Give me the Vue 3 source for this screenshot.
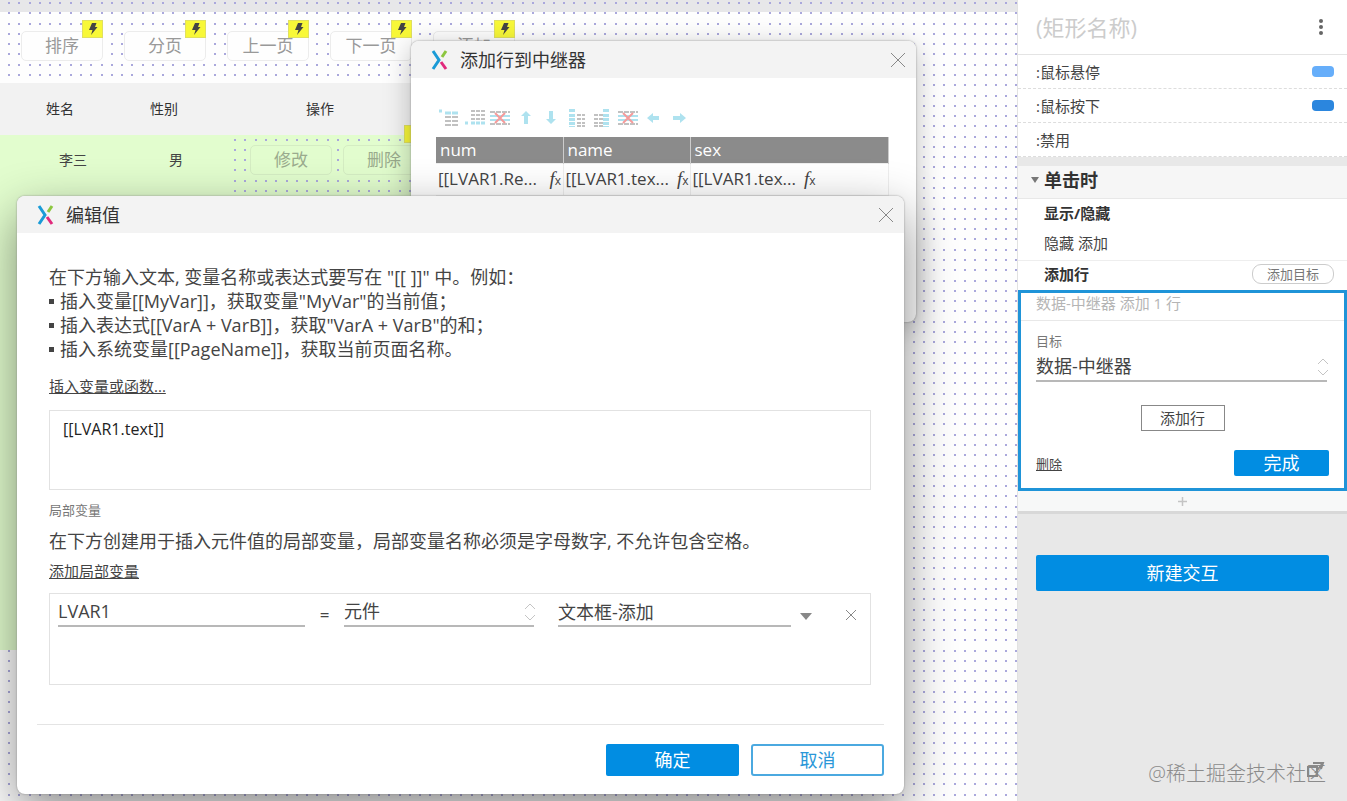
<script setup>
import { ref, computed } from 'vue'

const toolbar = ['排序', '分页', '上一页', '下一页', '添加']
const rowActions = ['修改', '删除']
const states = [
  { name: ':鼠标悬停', tone: 'light' },
  { name: ':鼠标按下', tone: 'deep' },
  { name: ':禁用', tone: '' }
]
const columns = ['num', 'name', 'sex']
const cells = ['[[LVAR1.Re...', '[[LVAR1.tex...', '[[LVAR1.tex...']

const expression = ref('[[LVAR1.text]]')
const variableName = ref('LVAR1')
const widgetName = ref('文本框-添加')

// One path holds every dot of the canvas grid.
const gridPath = computed(() => {
  const parts = []
  for (let row = 0; row < 120; row++) {
    for (let col = 0; col < 240; col++) {
      parts.push(`M${Math.round(8 + col * 10.28)} ${Math.round(3 + row * 10.28)}h2`)
    }
  }
  return parts.join('')
})

const tableTools = [
  { name: '在上方添加行', kind: 'rowAbove' },
  { name: '在下方添加行', kind: 'rowBelow' },
  { name: '删除行', kind: 'remove' },
  { name: '上移', kind: 'up' },
  { name: '下移', kind: 'down' },
  { name: '在左侧添加列', kind: 'colLeft' },
  { name: '在右侧添加列', kind: 'colRight' },
  { name: '删除列', kind: 'remove' },
  { name: '左移', kind: 'left' },
  { name: '右移', kind: 'right' }
]
</script>

<template>
  <div class="app">
    <main class="canvas">
      <div class="ruler"></div>
      <svg class="grid" aria-hidden="true"><path :d="gridPath" /></svg>
      <div class="toolbar">
        <div v-for="t in toolbar" :key="t" class="tool">
          <button class="ghost">{{ t }}</button>
          <span class="badge">
            <svg width="10" height="12" viewBox="0 0 10 12"><path d="M4 0H8.500L7 4H9.500L3 12L4.500 7H1L4 0Z" /></svg>
          </span>
        </div>
      </div>
      <div class="repeater-head">
        <span class="c-name">姓名</span>
        <span class="c-sex">性别</span>
        <span class="c-ops">操作</span>
      </div>
      <div class="repeater-row">
        <span class="r-name">李三</span>
        <span class="r-sex">男</span>
        <div class="r-ops">
          <svg class="op-grid" aria-hidden="true"><path :d="gridPath" transform="translate(-233 -132)" /></svg>
          <button v-for="a in rowActions" :key="a" class="ghost tinted">{{ a }}</button>
          <span class="badge op-badge"></span>
        </div>
      </div>
    </main>

    <aside class="panel">
      <header class="panel-head">
        <input class="shape-name" aria-label="矩形名称" placeholder="(矩形名称)" />
        <button class="icon-btn" aria-label="更多">
          <svg width="6" height="18" viewBox="0 0 6 18" fill="#666"><circle cx="3" cy="3" r="2" /><circle cx="3" cy="9" r="2" /><circle cx="3" cy="15" r="2" /></svg>
        </button>
      </header>
      <ul class="states">
        <li v-for="s in states" :key="s.name">
          <span>{{ s.name }}</span>
          <i v-if="s.tone" class="pill" :class="s.tone"></i>
        </li>
      </ul>
      <div class="event">
        <svg width="8" height="6" viewBox="0 0 8 6"><path d="M0 0H8L4 6Z" fill="#777" /></svg>
        <h2>单击时</h2>
      </div>
      <div class="action">
        <h3>显示/隐藏</h3>
        <p>隐藏 添加</p>
      </div>
      <div class="action-line">
        <h3>添加行</h3>
        <button class="target-btn">添加目标</button>
      </div>
      <section class="card">
        <p class="card-title">数据-中继器 添加 1 行</p>
        <div class="card-body">
          <label class="small-label" for="target">目标</label>
          <div class="select-wrap">
            <select id="target"><option>数据-中继器</option></select>
            <svg class="updown" width="12" height="18" viewBox="0 0 12 18"><path d="M1 6L6 1L11 6M1 12L6 17L11 12" /></svg>
          </div>
          <button class="add-row">添加行</button>
          <div class="card-foot">
            <a href="#" class="remove">删除</a>
            <button class="primary done">完成</button>
          </div>
        </div>
      </section>
      <button class="plus" aria-label="添加动作">
        <svg width="9" height="9" viewBox="0 0 9 9"><path d="M4.500 0V9M0 4.500H9" stroke="#c4c4c4" stroke-width="1.500" /></svg>
      </button>
      <div class="panel-rest">
        <button class="primary new">新建交互</button>
        <div class="watermark">@稀土掘金技术社区
          <svg class="popout" width="20" height="18" viewBox="0 0 20 18"><path d="M2 6H11V15H2ZM7 2H17L15 8M9 12L16 3" /></svg>
        </div>
      </div>
    </aside>

    <section class="dialog rows-dialog" role="dialog" aria-label="添加行到中继器">
      <header class="dialog-head">
        <svg width="17" height="20" viewBox="0 0 17 20" fill="none" stroke-width="3"><path d="M2 1L8 10L2 19" stroke="#1a9bd7" /><path d="M15 1L11 7" stroke="#8cc63f" /><path d="M10 12L15 19" stroke="#e0297c" /></svg>
        <h1>添加行到中继器</h1>
        <button class="icon-btn" aria-label="关闭"><svg class="cross" width="16" height="16" viewBox="0 0 16 16"><path d="M1 1L15 15M15 1L1 15" /></svg></button>
      </header>
      <div class="rows-body">
        <div class="table-tools">
          <button v-for="(t, i) in tableTools" :key="i" class="icon-btn" :aria-label="t.name">
            <svg width="20" height="18" viewBox="0 0 20 18" fill="none">
              <g v-if="t.kind === 'rowAbove'"><path d="M0 2H3M6 4H20" class="cy" stroke-dasharray="6 1" /><path d="M6 8H20M6 12H20M6 16H20" class="gr" stroke-dasharray="6 1" /></g>
              <g v-else-if="t.kind === 'rowBelow'"><path d="M6 2H20M6 6H20M6 10H20" class="gr" stroke-dasharray="4 1" /><path d="M0 14H3M6 14H20" class="cy" stroke-dasharray="4 1" /></g>
              <g v-else-if="t.kind === 'remove'"><path d="M0 3H20M0 15H20" class="gr" stroke-dasharray="5 1" /><path d="M0 7H20M0 11H20" class="cy thin" /><path d="M5 4L15 14M15 4L5 14" class="rd" /></g>
              <path v-else-if="t.kind === 'up'" d="M10 2L15 7H12V15H8V7H5Z" class="fill" />
              <path v-else-if="t.kind === 'down'" d="M10 15L5 10H8V2H12V10H15Z" class="fill" />
              <g v-else-if="t.kind === 'colLeft'"><path d="M5 0V3M5 5V18" class="cy wide" stroke-dasharray="3 1" /><path d="M10 6H18M10 10H18M10 14H18M10 17H18" class="gr" stroke-dasharray="4 1" /></g>
              <g v-else-if="t.kind === 'colRight'"><path d="M14 0V3M14 5V18" class="cy wide" stroke-dasharray="3 1" /><path d="M2 6H11M2 10H11M2 14H11M2 17H11" class="gr" stroke-dasharray="4 1" /></g>
              <path v-else-if="t.kind === 'left'" d="M4 9L10 4V7H16V11H10V14Z" class="fill" />
              <path v-else d="M17 9L11 4V7H4V11H11V14Z" class="fill" />
            </svg>
          </button>
        </div>
        <table>
          <colgroup><col class="w1" /><col class="w1" /><col /></colgroup>
          <thead><tr><th v-for="c in columns" :key="c">{{ c }}</th></tr></thead>
          <tbody><tr><td v-for="(c, i) in cells" :key="i"><div class="cell"><span>{{ c }}</span><i class="fx">f<sub>x</sub></i></div></td></tr></tbody>
        </table>
      </div>
    </section>

    <section class="dialog edit-dialog" role="dialog" aria-label="编辑值">
      <header class="dialog-head">
        <svg width="17" height="20" viewBox="0 0 17 20" fill="none" stroke-width="3"><path d="M2 1L8 10L2 19" stroke="#1a9bd7" /><path d="M15 1L11 7" stroke="#8cc63f" /><path d="M10 12L15 19" stroke="#e0297c" /></svg>
        <h1>编辑值</h1>
        <button class="icon-btn" aria-label="关闭"><svg class="cross" width="16" height="16" viewBox="0 0 16 16"><path d="M1 1L15 15M15 1L1 15" /></svg></button>
      </header>
      <div class="edit-body">
        <p class="help">在下方输入文本, 变量名称或表达式要写在 "[[ ]]" 中。例如：</p>
        <ul class="help">
          <li>插入变量[[MyVar]]，获取变量"MyVar"的当前值；</li>
          <li>插入表达式[[VarA + VarB]]，获取"VarA + VarB"的和；</li>
          <li>插入系统变量[[PageName]]，获取当前页面名称。</li>
        </ul>
        <a href="#" class="link insert">插入变量或函数...</a>
        <textarea v-model="expression" aria-label="表达式"></textarea>
        <p class="small-label">局部变量</p>
        <p class="help">在下方创建用于插入元件值的局部变量，局部变量名称必须是字母数字, 不允许包含空格。</p>
        <a href="#" class="link">添加局部变量</a>
        <div class="vars">
          <input v-model="variableName" class="v-name" aria-label="变量名" />
          <span class="eq">=</span>
          <div class="select-wrap v-type">
            <select aria-label="类型"><option>元件</option></select>
            <svg class="updown" width="12" height="18" viewBox="0 0 12 18"><path d="M1 6L6 1L11 6M1 12L6 17L11 12" /></svg>
          </div>
          <input v-model="widgetName" class="v-widget" aria-label="元件名" />
          <button class="icon-btn v-drop" aria-label="展开"><svg width="12" height="7" viewBox="0 0 12 7"><path d="M0 0H12L6 7Z" fill="#888" /></svg></button>
          <button class="icon-btn v-del" aria-label="移除"><svg class="cross" width="12" height="12" viewBox="0 0 12 12"><path d="M1 1L11 11M11 1L1 11" /></svg></button>
        </div>
      </div>
      <footer class="edit-foot">
        <button class="primary">确定</button>
        <button class="secondary">取消</button>
      </footer>
    </section>
  </div>
</template>

<style>
html, body { background: #fff; overflow: hidden; }
</style>

<style scoped>
.app {
  position: relative;
  display: flex;
  min-height: 100vh;
  overflow: hidden;
  color: #444;
  font-family: "Open Sans", "Noto Sans CJK SC", sans-serif;
  font-size: 15px;
  line-height: 24px;
}
*, *::before, *::after { box-sizing: border-box; }
h1, h2, h3, p, ul { margin: 0; padding: 0; }
ul { list-style: none; }
button, input, select, textarea {
  margin: 0; padding: 0; border: 0; outline: 0; border-radius: 0;
  background: none; color: inherit; font: inherit; appearance: none;
}
.icon-btn { display: flex; align-items: center; justify-content: center; }
svg { display: block; }

.canvas { position: relative; flex: 1; min-width: 0; overflow: hidden; background: #fefefe; }
.ruler { height: 12px; background: #e7e7e9; }
.grid { position: absolute; left: 0; top: 0; width: 100%; height: 100%; }
.grid path, .op-grid path { stroke: #aaa8dc; stroke-width: 2; }
.toolbar { position: relative; display: flex; gap: 21px; padding: 19px 21px 22px; }
.tool { position: relative; }
.ghost {
  display: block; width: 82px; height: 30px; padding: 0;
  border: 1px solid #ececec; border-radius: 5px;
  background: #fefefe; color: #999; font-size: 17px; line-height: 28px; text-align: center;
}
.badge {
  position: absolute; right: 0; top: -11px; width: 21px; height: 18px;
  display: flex; align-items: center; justify-content: center;
  border: 1px solid #e0e060; background: #f8f838;
}
.badge path { fill: #444; }
.repeater-head {
  position: relative; display: flex; align-items: center; width: 600px; height: 52px;
  background: #f2f2f2; color: #333; font-size: 14px;
}
.c-name { margin-left: 46px; width: 104px; }
.c-sex { width: 156px; }
.repeater-row {
  position: relative; display: flex; width: 600px; height: 515px;
  background: #e2fdce; color: #444; font-size: 14px; line-height: 50px;
}
.r-name { margin-left: 59px; width: 110px; }
.r-sex { width: 64px; }
.r-ops { position: relative; display: flex; gap: 11px; width: 206px; height: 62px; padding: 10px 0 0 17px; }
.op-grid { position: absolute; left: 0; top: 0; width: 100%; height: 100%; }
.tinted { position: relative; background: #e2fdce; border-color: #d5edc3; color: #9aab8d; }
.op-badge { top: -10px; right: 14px; }

.panel {
  position: relative; z-index: 1; width: 330px; display: flex; flex-direction: column;
  border-left: 1px solid #e2e2e2; background: #fff;
}
.panel-head {
  display: flex; align-items: center; justify-content: space-between;
  height: 55px; padding: 0 23px 0 18px; border-bottom: 1px solid #e4e4e4;
}
.shape-name { width: 200px; height: 34px; font-size: 22px; }
.shape-name::placeholder { color: #ccc; opacity: 1; }
.states li {
  display: flex; align-items: center; justify-content: space-between;
  height: 34px; padding: 0 13px 0 18px; border-bottom: 1px dashed #ddd;
}
.pill { width: 22px; height: 11px; border-radius: 4px; }
.light { background: #66aefa; }
.deep { background: #2b86de; }
.event {
  display: flex; align-items: center; gap: 5px; height: 42px; padding: 0 0 5px 13px;
  border-top: 9px solid #e8e8e8; border-bottom: 1px solid #e8e8e8; background: #f6f6f6;
}
h2 { color: #333; font-size: 18px; font-weight: 700; }
h3 { color: #333; font-size: 15px; font-weight: 700; }
.action { display: flex; flex-direction: column; gap: 6px; padding: 2px 0 5px 26px; border-bottom: 1px solid #eee; }
.action-line { display: flex; align-items: center; justify-content: space-between; height: 29px; padding: 0 13px 4px 26px; }
.target-btn { width: 82px; height: 20px; border: 1px solid #ccc; border-radius: 9px; color: #777; font-size: 13px; line-height: 18px; }
.card { border: 3px solid #1f94d8; background: #fff; }
.card-title { height: 28px; padding-left: 15px; border-bottom: 1px solid #e8e8e8; color: #b5b5b5; line-height: 20px; }
.card-body { display: flex; flex-direction: column; padding: 10px 15px 12px; }
.small-label { color: #777; font-size: 13px; line-height: 20px; }
.select-wrap { position: relative; }
.select-wrap select, .v-name, .v-widget {
  display: block; width: 100%; height: 31px; padding: 0;
  border-bottom: 2px solid #b8b8b8; font-size: 18px; line-height: 26px;
}
.updown { position: absolute; right: -2px; top: 7px; fill: none; stroke: #c4c4c4; stroke-width: 1; pointer-events: none; }
.card-body .select-wrap { margin-right: 2px; }
.add-row { align-self: center; width: 84px; height: 26px; margin-top: 23px; border: 1px solid #888; line-height: 24px; }
.card-foot { display: flex; align-items: flex-end; justify-content: space-between; margin-top: 19px; }
.remove { color: #444; font-size: 13px; line-height: 24px; }
.primary { border-radius: 2px; background: #018de2; color: #fff; font-size: 18px; text-align: center; }
.done { width: 95px; height: 26px; line-height: 24px; }
.plus { display: flex; align-items: center; justify-content: center; height: 20px; background: #f7f8f8; }
.panel-rest {
  position: relative; flex: 1; display: flex; flex-direction: column; justify-content: space-between;
  padding: 41px 18px 12px; border-top: 3px solid #d8d8d8; background: #e8e8e8;
}
.new { height: 36px; }
.watermark { position: relative; align-self: flex-end; margin-right: 3px; color: #8b8b8b; font-size: 20px; font-weight: 300; line-height: 30px; white-space: nowrap; }
.popout { position: absolute; right: 0; top: 2px; fill: none; stroke: #888; stroke-width: 2; }

.dialog { position: absolute; z-index: 2; display: flex; flex-direction: column; overflow: hidden; border-radius: 8px; background: #fff; }
.rows-dialog { left: 411px; top: 41px; width: 505px; height: 281px; box-shadow: 0 0 2px #888, 0 6px 28px rgba(0, 0, 0, .26); }
.edit-dialog { left: 17px; top: 196px; width: 887px; height: 598px; z-index: 3; box-shadow: 0 0 2px #888, 0 18px 50px rgba(0, 0, 0, .45); }
.dialog-head { display: flex; align-items: center; height: 37px; padding: 0 10px 0 20px; background: #f3f3f3; }
.dialog-head h1 { flex: 1; margin-left: 12px; color: #333; font-size: 18px; font-weight: 400; }
.cross { fill: none; stroke: #888; stroke-width: 1; }
.rows-body { padding: 30px 27px 0 25px; }
.table-tools { display: flex; justify-content: space-between; width: 253px; padding-left: 3px; margin-bottom: 9px; height: 20px; opacity: .6; }
.cy { stroke: #79cfe6; stroke-width: 3; }
.wide { stroke-width: 6; }
.thin { stroke-width: 2; }
.gr { stroke: #999; stroke-width: 2; }
.rd { stroke: #ef5a5a; stroke-width: 2; }
.fill { fill: #79cfe6; }
table { width: 100%; border-collapse: collapse; table-layout: fixed; font-size: 17px; }
.w1 { width: 127px; }
th { height: 26px; padding: 0 4px; border-right: 1px solid #ccc; background: #8b8b8b; color: #fff; font-weight: 400; text-align: left; line-height: 24px; }
td { height: 32px; padding: 0 0 0 2px; border: 1px solid #eee; border-left: 0; }
.cell { display: flex; justify-content: space-between; max-width: 124px; padding-right: 1px; white-space: nowrap; }
.fx { font-family: "Liberation Serif", serif; font-size: 19px; }
.fx sub { font-family: "Open Sans", sans-serif; font-size: 12px; font-style: normal; line-height: 0; vertical-align: baseline; }

.edit-body { flex: 1; display: flex; flex-direction: column; padding: 32px 33px 0 32px; }
.help { font-size: 18px; line-height: 24px; white-space: nowrap; }
.help li { display: flex; align-items: center; gap: 6px; }
.help li::before { content: ""; width: 5px; height: 5px; background: #444; }
.link { align-self: flex-start; color: #444; font-size: 15px; line-height: 24px; }
.insert { margin: 13px 0 12px; }
textarea { height: 80px; padding: 6px 13px; margin-bottom: 10px; border: 1px solid #e2e2e2; resize: none; color: #222; font-size: 16px; line-height: 24px; }
.edit-body .small-label { margin-bottom: 9px; }
.edit-body .link:not(.insert) { margin: 6px 0 10px; }
.vars { display: flex; align-items: flex-start; height: 92px; padding: 2px 13px 0 8px; border: 1px solid #e2e2e2; }
.v-name { width: 247px; }
.eq { width: 39px; padding-top: 7px; text-align: center; font-size: 17px; }
.v-type { width: 190px; margin-right: 24px; }
.v-widget { width: 233px; }
.v-drop { margin: 17px 0 0 9px; }
.v-del { margin: 13px 0 0 auto; }
.edit-foot { display: flex; justify-content: flex-end; gap: 12px; height: 70px; margin: 0 20px; padding-top: 19px; border-top: 1px solid #e4e4e4; }
.edit-foot button { width: 133px; height: 32px; line-height: 30px; font-size: 18px; }
.secondary { border: 2px solid #4ba9e0; border-radius: 3px; background: #fff; color: #2a97d8; }
.edit-foot .secondary { line-height: 26px; }
</style>
